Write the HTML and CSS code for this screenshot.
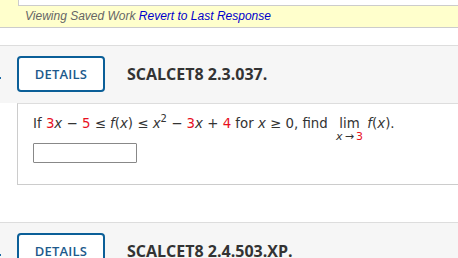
FILE: index.html
```html
<!DOCTYPE html>
<html>
<head>
<meta charset="utf-8">
<link rel="stylesheet" href="styles.css">
</head>
<body>
<div class="saved">
  <div class="saved-box"></div>
  <div class="saved-text">Viewing Saved Work <a class="revert" href="#">Revert to Last Response</a></div>
</div>
<div class="spacer"></div>
<div class="qhead">
  <span class="num-dot"></span>
  <button class="details">DETAILS</button>
  <span class="qtitle">SCALCET8 2.3.037.</span>
</div>
<div class="qbody">
  <div class="problem">If <span class="r">3</span><i>x</i> &minus; <span class="r">5</span> &le; <i>f</i>(<i>x</i>) &le; <i>x</i><sup>2</sup> &minus; <span class="r">3</span><i>x</i> + <span class="r">4</span> for <i>x</i> &ge; 0, find <span class="lim"><span class="lim-top">lim</span><span class="lim-sub"><i>x</i>&thinsp;&rarr;&thinsp;<span class="r">3</span></span></span> <i>f</i>(<i>x</i>).</div>
  <div class="answer"><input class="ans" type="text"></div>
</div>
<div class="gap"></div>
<div class="qhead">
  <span class="num-dot"></span>
  <button class="details">DETAILS</button>
  <span class="qtitle">SCALCET8 2.4.503.XP.</span>
</div>
</body>
</html>
```
FILE: styles.css
```css
html, body { margin: 0; padding: 0; background: #fff; overflow: hidden; }
body { width: 458px; height: 258px; }
.saved {
  background: #ffffcc;
  border-bottom: 1px solid #cccccc;
  height: 28px;
  box-sizing: border-box;
}
.saved-box {
  margin-left: 18px;
  height: 6px;
  box-sizing: border-box;
  background: #fff;
  border-left: 1px solid #cccccc;
  border-bottom: 1px solid #cccccc;
}
.saved-text {
  padding-left: 25px;
  font-family: "Liberation Sans", Arial, sans-serif;
  font-style: italic;
  font-size: 12px;
  line-height: 20px;
  color: #666666;
}
.revert { color: #0000cc; text-decoration: none; }
.spacer { height: 17px; }
.qhead {
  display: flex;
  align-items: center;
  background: #f6f6f6;
  border-top: 1px solid #dddddd;
  padding: 10px 0 11px 0;
}
.num-dot { width: 1px; height: 2px; background: #1a6aa8; margin-top: 8px; }
.details {
  margin-left: 16px;
  width: 88px;
  height: 36px;
  box-sizing: border-box;
  border: 2px solid #0b5f98;
  border-radius: 4px;
  background: #fff;
  color: #1d5a8c;
  font-family: "Open Sans", sans-serif;
  font-size: 13px;
  font-weight: 600;
  letter-spacing: 0.2px;
  padding: 0;
}
.qtitle {
  margin-left: 22px;
  font-family: "Open Sans", sans-serif;
  font-weight: 700;
  font-size: 16px;
  color: #333333;
}
.qbody {
  margin-left: 17px;
  border-left: 1px solid #cccccc;
  border-bottom: 1px solid #cccccc;
  border-top: 1px solid #dddddd;
  height: 82px;
  box-sizing: border-box;
  padding: 10px 0 0 15px;
  font-family: "DejaVu Sans", Verdana, sans-serif;
  font-size: 13.33px;
  color: #333333;
}
.problem { line-height: 20px; white-space: nowrap; }
.problem i { font-style: italic; }
.problem sup { font-size: 10px; line-height: 0; vertical-align: 6px; }
.r { color: #e8101e; }
.lim { display: inline-flex; flex-direction: column; align-items: center; vertical-align: top; margin-left: 4px; }
.lim-top { line-height: 20px; }
.lim-sub { font-size: 11px; line-height: 10px; margin-top: -2px; }
.answer { margin-top: 1px; }
.ans {
  display: block;
  width: 104px;
  height: 20px;
  box-sizing: border-box;
  border: 1px solid #888888;
  border-radius: 1px;
  margin: 0;
  padding: 0;
}
.gap { height: 37px; }
```
